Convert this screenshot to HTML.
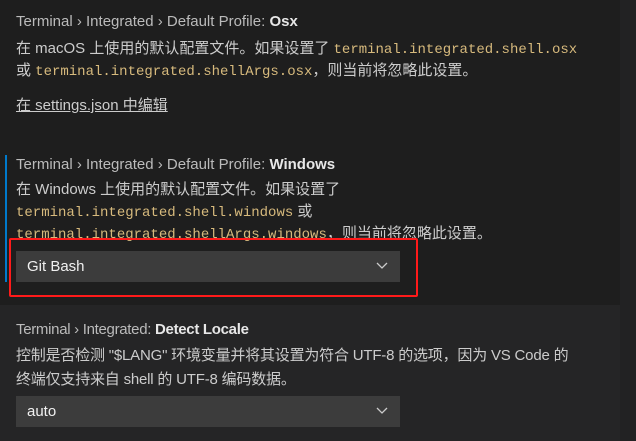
<!DOCTYPE html>
<html><head><meta charset="utf-8"><style>
body{margin:0;width:636px;height:441px;background:#1e1e1e;overflow:hidden;font-family:"Liberation Sans","Noto Sans CJK SC",sans-serif;font-size:15px;color:#cccccc;position:relative}
.a{position:absolute;white-space:nowrap}
.t{font-size:15px;color:#bbbbbb}
.t b{color:#e7e7e7}
code{font-family:"Liberation Mono",monospace;font-size:14px;color:#d7ba7d}
.dd{position:absolute;background:#3c3c3c;color:#f0f0f0;font-size:15px;height:31px;line-height:31px;padding-left:11px;box-sizing:border-box}
.dd svg{position:absolute;right:12px;top:11px}
</style></head><body>
<div class="a" style="left:0;top:305px;width:620px;height:136px;background:#252526"></div>
<div class="a" style="left:620px;top:0;width:16px;height:441px;background:#222223"></div>
<div class="a t" style="left:16px;top:13px">Terminal › Integrated › Default Profile: <b>Osx</b></div>
<div class="a" style="left:16px;top:37px">在 macOS 上使用的默认配置文件。如果设置了 <code>terminal.integrated.shell.osx</code></div>
<div class="a" style="left:16px;top:59px">或 <code>terminal.integrated.shellArgs.osx</code>，则当前将忽略此设置。</div>
<div class="a" style="left:16px;top:94px;text-decoration:underline">在 settings.json 中编辑</div>
<div class="a" style="left:5px;top:155px;width:2px;height:127px;background:#007acc"></div>
<div class="a t" style="left:16px;top:156px">Terminal › Integrated › Default Profile: <b>Windows</b></div>
<div class="a" style="left:16px;top:178px">在 Windows 上使用的默认配置文件。如果设置了</div>
<div class="a" style="left:16px;top:200px"><code>terminal.integrated.shell.windows</code> 或</div>
<div class="a" style="left:16px;top:222px"><code>terminal.integrated.shellArgs.windows</code>，则当前将忽略此设置。</div>
<div class="dd" style="left:16px;top:251px;width:384px">Git Bash<svg width="12" height="8" viewBox="0 0 12 8"><path d="M1 1l5 5 5-5" stroke="#ccc" stroke-width="1.3" fill="none"/></svg></div>
<div class="a" style="left:9px;top:238px;width:405px;height:55px;border:2px solid #ff1a1a;border-radius:2px"></div>
<div class="a t" style="left:16px;top:321px;letter-spacing:-0.3px">Terminal › Integrated: <b>Detect Locale</b></div>
<div class="a" style="left:16px;top:344px;letter-spacing:-0.2px">控制是否检测 "$LANG" 环境变量并将其设置为符合 UTF-8 的选项，因为 VS Code 的</div>
<div class="a" style="left:16px;top:368px;letter-spacing:-0.2px">终端仅支持来自 shell 的 UTF-8 编码数据。</div>
<div class="dd" style="left:16px;top:396px;width:384px">auto<svg width="12" height="8" viewBox="0 0 12 8"><path d="M1 1l5 5 5-5" stroke="#ccc" stroke-width="1.3" fill="none"/></svg></div>
</body></html>
